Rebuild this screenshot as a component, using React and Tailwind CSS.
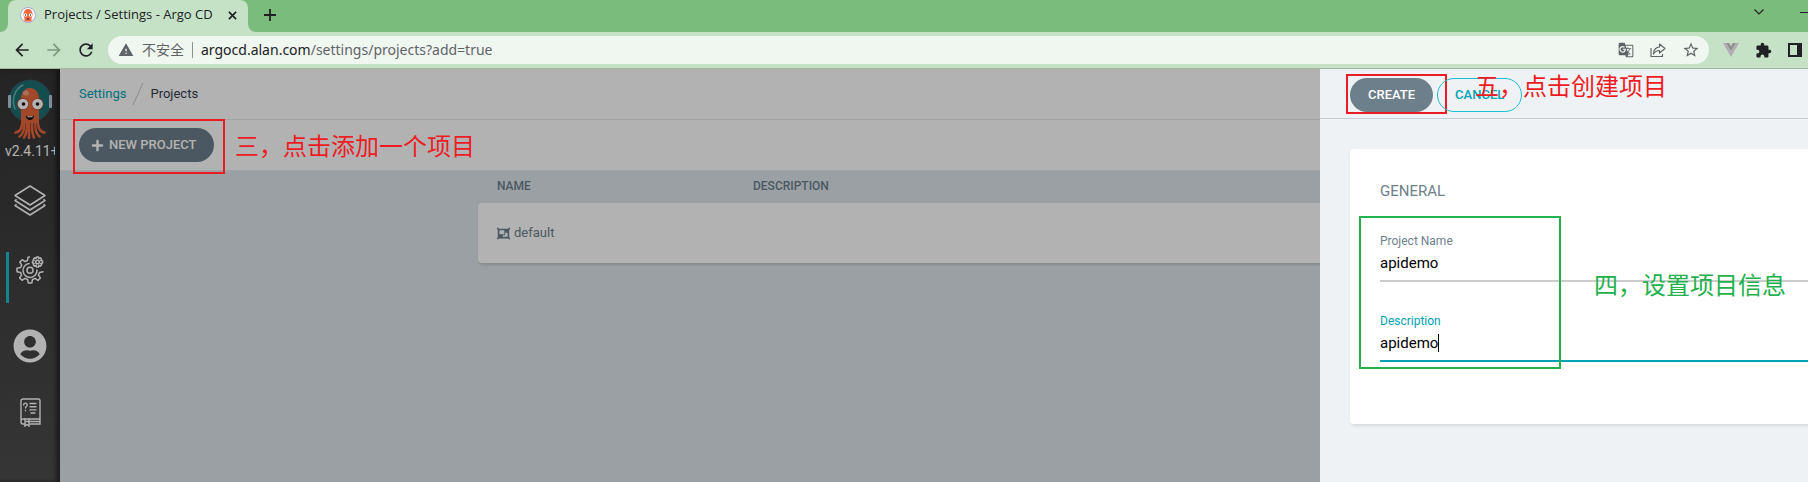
import { FaPlus, FaObjectGroup, FaUserCircle } from "react-icons/fa";
import { MdArrowBack, MdArrowForward, MdRefresh, MdStarBorder, MdExtension, MdWarning, MdGTranslate } from "react-icons/md";

const roboto = "font-['Roboto','Noto_Sans_CJK_SC',sans-serif]";
const noteFont = "pointer-events-none absolute whitespace-nowrap text-2xl leading-8 font-['Noto_Sans_CJK_SC',sans-serif]";

function Octopus({ className }) {
  return (
    <svg viewBox="0 0 46 60" className={className} aria-hidden="true">
      <circle cx="23" cy="22" r="21.5" fill="#33606f" />
      <circle cx="23" cy="22" r="20" fill="#1c7072" />
      <rect x="1" y="16" width="3" height="13" rx="1" fill="#b9cbdc" />
      <rect x="42" y="16" width="3" height="13" rx="1" fill="#b9cbdc" />
      <path d="M8 30C4 20 8 10 16 6" fill="none" stroke="#6bb0ab" strokeWidth="1.500" strokeLinecap="round" />
      <path d="M14 20c0-7 4-11 9-11s9 4 9 11v24H14z" fill="#e8683d" />
      <g fill="none" stroke="#e8683d" strokeLinecap="round" strokeWidth="2.600">
        <path d="M15.500 40c0 8-2 13-7 13.500" />
        <path d="M17.500 43c0 7-1 12-5 14.500" />
        <path d="M20 43c0 7 0 12-3 15.500" />
        <path d="M22 43v16" />
        <path d="M25 43c0 7 0 12 2 15.500" />
        <path d="M28 43c0 7 1 12 4.500 14.500" />
        <path d="M30.500 40c0 8 2 13 7 13.500" />
      </g>
      <path d="M18.500 45v6M23.500 45v8M28 45v6" stroke="#b84a26" strokeWidth=".8" />
      <ellipse cx="19" cy="14" rx="3" ry="2.500" fill="#f0a183" />
      <circle cx="16" cy="25" r="6" fill="#c23c2a" />
      <circle cx="30.500" cy="25" r="6" fill="#c23c2a" />
      <circle cx="16" cy="25" r="5.300" fill="#fff" />
      <circle cx="30.500" cy="25" r="5.300" fill="#fff" />
      <circle cx="16.500" cy="25" r="1.800" fill="#111" />
      <circle cx="30.500" cy="25" r="1.800" fill="#111" />
      <path d="M19 36.500c2.500 1.200 5.500 1.200 8 0 0 6-8 6-8 0z" fill="#111" />
      <path d="M20.500 37.100c1.700.5 3.300.5 5 0v1.200h-5z" fill="#fff" />
    </svg>
  );
}

function Favicon() {
  return (
    <svg viewBox="0 0 16 16" className="size-4" aria-hidden="true">
      <circle cx="8" cy="8" r="7.500" fill="#fff" stroke="#a9a3d6" />
      <path d="M3.500 7a4.500 5 0 0 1 9 0c0 3-1 3-1 5v2.500h-7V12c0-2-1-2-1-5z" fill="#f0693e" />
      <circle cx="5.500" cy="8" r="1.700" fill="#fff" />
      <circle cx="10.500" cy="8" r="1.700" fill="#fff" />
      <circle cx="5.500" cy="8" r=".7" fill="#222" />
      <circle cx="10.500" cy="8" r=".7" fill="#222" />
      <path d="M6.500 11.500h3l-1.500 1.500z" fill="#222" />
    </svg>
  );
}

function LayersIcon() {
  return (
    <svg viewBox="0 0 32 31" className="h-[31px] w-8" fill="none" stroke="#fff" strokeWidth="1.500" strokeLinejoin="round" aria-hidden="true">
      <path d="M16 1 31 10.500 16 20 1 10.500z" />
      <path d="M2.500 14.200 1 15.500 16 25l15-9.500-1.500-1.300" />
      <path d="M2.500 19.200 1 20.500 16 30l15-9.500-1.500-1.300" />
    </svg>
  );
}

function GearsIcon() {
  return (
    <svg viewBox="0 0 28 28" className="size-7" fill="none" stroke="#fff" strokeWidth="1.500" strokeLinejoin="round" strokeLinecap="round" aria-hidden="true">
      <path d="M13.500 1 12 1.300 11.500 4.500 9 5.600 6.300 3.700 3.800 6.100 5.700 8.900 4.600 11.500 1 12.200v3.500l3.500.7 1.100 2.600-2 2.900L6.100 24.300 9 22.400l2.600 1.100.7 3.500h3.500l.7-3.500 2.600-1.100 2.900 2 2.400-2.500-2-2.900 1.200-2.600 3.400-.7" />
      <path d="M13 7.500a7 7 0 1 0 8 6.500" />
      <circle cx="14" cy="14.200" r="3" />
      <path d="M20.500 1h2l.4 1.700 1.400-.9 1.300 1.400-.9 1.400 1.900.4v2l-1.900.4.9 1.500-1.300 1.300-1.400-.9-.4 1.700h-2l-.4-1.700-1.500.9-1.300-1.300.9-1.500-1.700-.4V5l1.700-.4-.9-1.400 1.300-1.400 1.500.9z" />
      <circle cx="21.500" cy="6" r="1.800" />
    </svg>
  );
}

function DocsIcon() {
  return (
    <svg viewBox="0 0 21 29" className="h-[29px] w-[21px]" fill="none" stroke="#fff" strokeWidth="1.400" strokeLinecap="round" aria-hidden="true">
      <path d="M20 21V2.500A1.500 1.500 0 0 0 18.500 1H3A2 2 0 0 0 1 3v21a2 2 0 0 0 2 2h2M20 21H3a2 2 0 0 0-2 2M10 26h10v-5M6 23.500h13" />
      <path d="M5 21v7l2-1.500L9 28v-7" />
      <path d="M3.700 7c0-2.500 3.500-2.500 3.500 0 0 1.500-1.700 1.500-1.700 3M5.500 12.500v.3M10 5.500h6M10 8.700h6M10 11.900h6M11 15h4" />
    </svg>
  );
}

function BrowserChrome() {
  return (
    <header className="font-['Open_Sans','Noto_Sans_CJK_SC',sans-serif] text-[#202124]">
      <div className="flex h-8 items-end justify-between bg-[#7abc7c]">
        <div className="flex items-end">
          <div className="flex w-2 bg-[#c5e2c6]">
            <span className="h-2 w-2 rounded-br-lg bg-[#7abc7c]" />
          </div>
          <div className="flex h-8 w-[240px] items-center rounded-t-lg bg-[#c5e2c6] pr-2 pb-[2px] pl-3">
            <Favicon />
            <span className="grow pl-2 text-[13px] whitespace-nowrap">Projects / Settings - Argo CD</span>
            <button aria-label="Close tab" className="grid size-4 place-items-center">
              <svg viewBox="0 0 10 10" className="size-[9px]" stroke="#202124" strokeWidth="1.800" aria-hidden="true"><path d="m1 1 8 8M9 1 1 9" /></svg>
            </button>
          </div>
          <div className="flex w-2 bg-[#c5e2c6]">
            <span className="h-2 w-2 rounded-bl-lg bg-[#7abc7c]" />
          </div>
          <button aria-label="New tab" className="ml-1 grid h-8 w-5 place-items-center pb-[2px]">
            <svg viewBox="0 0 12 12" className="size-3" stroke="#202124" strokeWidth="1.800" aria-hidden="true"><path d="M6 0v12M0 6h12" /></svg>
          </button>
        </div>
        <div className="flex h-8 items-start gap-9 pt-2">
          <button aria-label="Search tabs" className="pt-px">
            <svg viewBox="0 0 10 6" className="h-[6px] w-[10px]" fill="none" stroke="#202124" strokeWidth="1.200" aria-hidden="true"><path d="m.5.500 4.500 4.500L9.500.500" /></svg>
          </button>
          <button aria-label="Minimize" className="flex w-2 pt-1"><span className="h-px w-full bg-[#202124]" /></button>
        </div>
      </div>
      <div className="flex h-[37px] items-center border-b border-[#a3b8a4] bg-[#c5e2c6] pr-[6px] pl-3">
        <div className="flex w-24 items-center gap-3">
          <button aria-label="Back"><MdArrowBack className="size-5" /></button>
          <button aria-label="Forward"><MdArrowForward className="size-5 text-[#7f9781]" /></button>
          <button aria-label="Reload"><MdRefresh className="size-5" /></button>
        </div>
        <div className="flex h-7 min-w-0 grow items-center rounded-full bg-[#f0f7f0] pr-[9px] pl-[10px]">
          <MdWarning className="size-4 shrink-0 text-[#5f6368]" />
          <span className="ml-2 shrink-0 text-sm text-[#5f6368]">不安全</span>
          <span className="mx-2 h-4 w-px bg-[#8d9290]" />
          <span className="grow truncate font-['Noto_Sans',sans-serif] text-sm text-[#5f6368]"><span className="text-[#202124]">argocd.alan.com</span>/settings/projects?add=true</span>
          <div className="flex items-center gap-4 text-[#5f6368]">
            <button aria-label="Translate"><MdGTranslate className="size-4" /></button>
            <button aria-label="Share">
              <svg viewBox="0 0 16 16" className="size-4" fill="none" stroke="currentColor" strokeWidth="1.200" strokeLinejoin="round" aria-hidden="true">
                <path d="M1 6v8.500h11.500V12M9.500 5V2L15 6.500 9.500 11V8.500C6.500 8.500 5 9.500 3.500 12 3.500 8 6 5 9.500 5z" />
              </svg>
            </button>
            <button aria-label="Bookmark"><MdStarBorder className="size-[18px]" /></button>
          </div>
        </div>
        <div className="flex items-center gap-4 pl-[14px]">
          <button aria-label="Vue devtools">
            <svg viewBox="0 0 16 14" className="h-[14px] w-4" aria-hidden="true"><path d="M0 0h3.200L8 8.200 12.800 0H16L8 14z" fill="#b3adb3" /><path d="M3.200 0h3L8 3.200 9.800 0h3L8 8.200z" fill="#8f8f8f" /></svg>
          </button>
          <button aria-label="Extensions"><MdExtension className="size-[17px]" /></button>
          <button aria-label="Side panel" className="h-[14px] w-[14px] border-2 border-r-[5px] border-[#202124]" />
        </div>
      </div>
    </header>
  );
}

function Sidebar() {
  return (
    <nav className="flex w-[60px] shrink-0 flex-col items-center bg-linear-to-b from-[#343434] to-[#4d4d4d] pt-[10px] shadow-[inset_-4px_0_4px_rgba(0,0,0,0.45)]">
      <a href="#home" aria-label="Argo CD"><Octopus className="h-[60px] w-[46px]" /></a>
      <span className="mt-[2px] w-[50px] overflow-hidden text-sm leading-5 whitespace-nowrap text-white">v2.4.11+</span>
      <a href="#applications" aria-label="Applications" className="mt-6"><LayersIcon /></a>
      <a href="#settings" aria-label="Settings" className="mt-9 flex h-[51px] w-12 items-start justify-center border-l-3 border-[#1bbdcf] pt-1 pr-[3px]"><GearsIcon /></a>
      <a href="#user" aria-label="User info" className="mt-[26px] text-white"><FaUserCircle className="size-[34px]" /></a>
      <a href="#help" aria-label="Documentation" className="mt-[35px]"><DocsIcon /></a>
    </nav>
  );
}

function Field({ id, label, active }) {
  return (
    <div className={active ? "border-b-2 border-[#00a2b3] pb-[3px]" : "border-b-2 border-[#ccc] pb-[3px]"}>
      <label htmlFor={id} className={active ? "block text-xs leading-4 text-[#00a2b3]" : "block text-xs leading-4 text-[#6d7f8b]"}>{label}</label>
      <div className="relative">
        <input id={id} defaultValue="apidemo" className="block h-7 w-full bg-transparent text-[15px] text-black outline-none" />
        {active && <span className="absolute top-[5px] left-[58px] h-[18px] w-px bg-black" />}
      </div>
    </div>
  );
}

function CreatePanel() {
  return (
    <aside className="absolute inset-y-0 right-0 w-[488px] bg-[#eef2f5]">
      <div className="flex h-[50px] items-center gap-1 border-b border-[#c6cdd2] pt-[2px] pl-[30px]">
        <div className="relative">
          <button className="block h-[34px] rounded-full bg-[#6d7f8b] px-[18px] text-[13px] font-medium text-white">CREATE</button>
          <span className="pointer-events-none absolute -top-1 -right-[14px] -bottom-[2px] -left-1 border-2 border-[#ed1c24]" />
        </div>
        <div className="relative">
          <button className="block h-[34px] rounded-full border border-[#1fbdd0] px-[17px] text-[13px] font-medium text-[#00a2b3]">CANCEL</button>
          <span className={`${noteFont} -top-[9px] left-[38px] text-[#ed1c24]`}>五，点击创建项目</span>
        </div>
      </div>
      <div className="pt-[30px] pl-[30px]">
        <form className="relative rounded-l bg-white pt-8 pb-[62px] pl-[30px] shadow-[1px_2px_3px_rgba(0,0,0,0.1)]">
          <h2 className="text-[15px] leading-5 text-[#6d7f8b]">GENERAL</h2>
          <div className="mt-8 flex flex-col gap-[31px]">
            <Field id="project-name" label="Project Name" />
            <Field id="project-description" label="Description" active />
          </div>
          <span className="pointer-events-none absolute top-[67px] left-[9px] h-[153px] w-[202px] border-2 border-[#22b14c]" />
          <span className={`${noteFont} top-[119px] left-[244px] text-[#22b14c]`}>四，设置项目信息</span>
        </form>
      </div>
    </aside>
  );
}

export default function App() {
  return (
    <div className="flex min-h-screen flex-col overflow-hidden">
      <BrowserChrome />
      <div className={`relative flex grow ${roboto}`}>
        <Sidebar />
        <main className="min-w-0 grow bg-[#dee6eb]">
          <div className="flex h-[51px] items-center border-b border-[#eaeaea] bg-white pl-[19px] text-[13px]">
            <a href="#settings" className="text-[#00a2b3]">Settings</a>
            <svg viewBox="0 0 12 22" className="mx-[6px] h-[22px] w-3" stroke="#c3ccd2" aria-hidden="true"><path d="M11 0 1 22" /></svg>
            <span className="text-[#363c4a]">Projects</span>
          </div>
          <div className="flex h-[51px] items-center border-b border-[#eaeaea] bg-white pl-[19px]">
            <button className="flex h-[34px] items-center gap-[5px] rounded-full bg-[#6d7f8b] pr-[18px] pl-3 text-[13px] font-medium text-white">
              <FaPlus className="size-[13px]" />NEW PROJECT
            </button>
          </div>
          <table className="mx-auto w-full max-w-[912px] table-fixed border-separate border-spacing-0 text-left text-[#6d7f8b]">
            <thead>
              <tr className="h-8 text-xs">
                <th className="w-[275px] pb-[2px] pl-[19px] font-medium">NAME</th>
                <th className="pb-[2px] font-medium">DESCRIPTION</th>
              </tr>
            </thead>
            <tbody className="rounded shadow-[1px_2px_3px_rgba(0,0,0,0.15)]">
              <tr className="h-[60px] bg-white text-[13px]">
                <td className="rounded-l pl-[19px]"><span className="flex items-center gap-1"><FaObjectGroup className="size-[13px]" />default</span></td>
                <td className="rounded-r" />
              </tr>
            </tbody>
          </table>
        </main>
        <div className="absolute inset-0 bg-black/30">
          <span className="absolute top-[50px] left-[73px] h-[55px] w-[152px] border-2 border-[#ed1c24]" />
          <span className={`${noteFont} top-[60px] left-[235px] text-[#ed1c24]`}>三，点击添加一个项目</span>
        </div>
        <CreatePanel />
      </div>
    </div>
  );
}
